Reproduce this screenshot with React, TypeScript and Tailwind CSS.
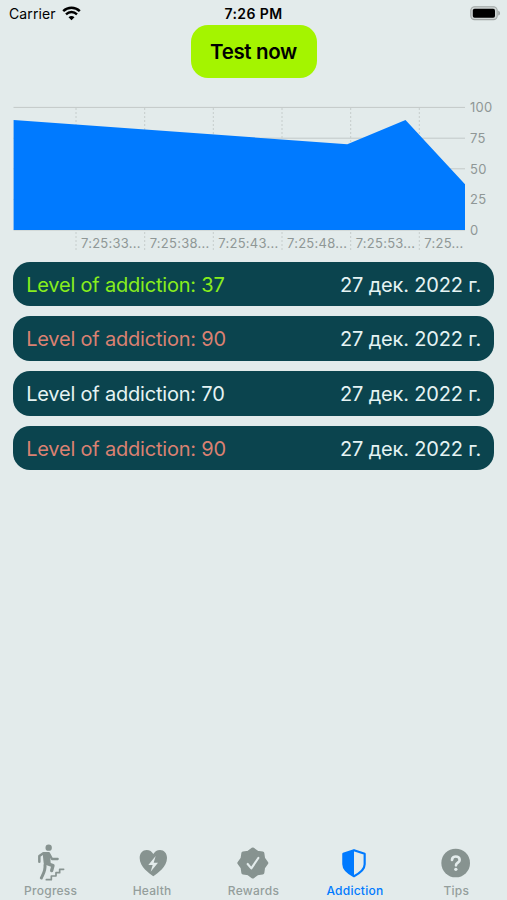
import React from "react";

const ticks = [
  { x: 76, label: "7:25:33..." },
  { x: 144.7, label: "7:25:38..." },
  { x: 213.3, label: "7:25:43..." },
  { x: 282, label: "7:25:48..." },
  { x: 350.7, label: "7:25:53..." },
  { x: 419.3, label: "7:25..." },
];

const levels = [
  { v: 100, y: 107.4 },
  { v: 75, y: 138.2 },
  { v: 50, y: 168.8 },
  { v: 25, y: 199.4 },
  { v: 0, y: 230 },
];

function StatusBar() {
  return (
    <header className="grid h-[25px] grid-cols-3 items-center pt-[2px] text-[14px]">
      <div className="flex items-center gap-[6px] pl-[9px]">
        <span className="tracking-[0.1px]">Carrier</span>
        <svg width="19" height="15" viewBox="0 0 19 15" className="-mt-[1px]" fill="none" stroke="#000">
          <path d="M1.2 5.2C6 .7 13 .7 17.8 5.2" strokeWidth="2.5" />
          <path d="M4 8.3c3.2-3 7.8-3 11 0" strokeWidth="2.4" />
          <path d="M9.5 14.2 6.5 11.2c1.7-1.6 4.3-1.6 6 0z" fill="#000" stroke="none" />
        </svg>
      </div>
      <div className="text-center font-semibold tracking-[0.4px]">7:26 PM</div>
      <div className="flex justify-end pr-[6px]">
        <svg width="31" height="15" viewBox="0 0 31 15">
          <rect x=".8" y=".8" width="26.4" height="12.8" rx="3.8" fill="#cfd5d4" stroke="#a0a6a5" strokeWidth="1.1" />
          <rect x="2.8" y="2.7" width="22.2" height="9" rx="1.8" />
          <path d="M28.2 4.8c2.5.6 2.5 4.2 0 4.8z" fill="#a0a6a5" />
        </svg>
      </div>
    </header>
  );
}

function Chart() {
  return (
    <svg className="mt-[12px] block h-[172px] w-full" viewBox="0 90 507 172">
      {levels.map((l) => (
        <line key={l.v} x1="13.5" x2="465" y1={l.y} y2={l.y} stroke="#c3c9c8" />
      ))}
      {ticks.map((t) => (
        <line key={t.x} x1={t.x} x2={t.x} y1="108" y2="252" stroke="#c6cdcc" strokeDasharray="2 2" />
      ))}
      <path d="M13.6 120 347.3 144.2 405.5 120 465 184.3V230H13.6z" fill="#007aff" />
      <g fill="#8f9796" className="text-[13px]">
        {levels.map((l) => (
          <text key={l.v} x="470" y={l.y + 4.7} className="tracking-[0.3px]">{l.v}</text>
        ))}
        {ticks.map((t) => (
          <text key={t.x} x={t.x + 5} y="247.5" className="tracking-[0.25px]">{t.label}</text>
        ))}
      </g>
    </svg>
  );
}

function Row({ level, color }: { level: number; color: string }) {
  return (
    <div className="flex h-[44.6px] items-center justify-between rounded-[17px] bg-[#0b444e] px-[13px] pt-[1.6px] text-[20px]">
      <span className={"tracking-[-0.2px] " + color}>Level of addiction: {level}</span>
      <span className="tracking-[-0.17px] text-[#e5f3f3]">27 дек. 2022 г.</span>
    </div>
  );
}

function StairsIcon() {
  return (
    <g fill="none" stroke="#879390" strokeLinecap="round" strokeLinejoin="round">
      <circle cx="44" cy="14" r="9.500" fill="#879390" stroke="none" />
      <path d="M30 31h14l2 29H33z" fill="#879390" strokeWidth="8" />
      <path d="M28 31 16 39v17" strokeWidth="7.5" />
      <path d="m46 33 8 15h17" strokeWidth="7" />
      <path d="m38 61 19 7-4 15" strokeWidth="10" />
      <path d="M33 66c2 16-4 24-11 39" strokeWidth="9" />
      <path d="M37 110h15V99h14V89h11V79h12" strokeWidth="5" />
    </g>
  );
}

function HeartIcon() {
  return (
    <>
      <path d="M55 100C43 91 14 72 14 45c0-15 9-24 21-24 9 0 16 5 20 12 4-7 11-12 20-12 12 0 21 9 21 24 0 27-29 46-41 55z" fill="#879390" />
      <path d="M62 39 40 66h13l-6 20 22-27H56z" fill="#e3ebeb" />
    </>
  );
}

function BadgeIcon() {
  return (
    <>
      <path
        d="M50.500 19 63.500 28.600 79.500 31 81.900 47 91.500 60 81.900 73 79.500 89 63.500 91.400 50.500 101 37.500 91.400 21.500 89 19.100 73 9.500 60 19.100 47 21.500 31 37.500 28.600z"
        fill="#879390" stroke="#879390" strokeWidth="11" strokeLinejoin="round"
      />
      <path d="m35 63 11 13 21-31" fill="none" stroke="#e3ebeb" strokeWidth="6.5" strokeLinecap="round" strokeLinejoin="round" />
    </>
  );
}

function ShieldIcon() {
  return (
    <>
      <path d="M48 21.500 80 32.500V64C80 81 65 91 48 99.500 31 91 16 81 16 64V32.500z" fill="none" stroke="#007aff" strokeWidth="6.5" strokeLinejoin="round" />
      <path d="M48 21 16 32v32c0 17 15 27 32 36z" fill="#007aff" />
    </>
  );
}

function HelpIcon() {
  return (
    <>
      <circle cx="50" cy="60" r="43" fill="#879390" />
      <path d="M39 51c0-14 23-14 23 0 0 8-11 8-11 16" fill="none" stroke="#e3ebeb" strokeWidth="8" strokeLinecap="round" />
      <circle cx="50.500" cy="79" r="5" fill="#e3ebeb" />
    </>
  );
}

const tabs = [
  { label: "Progress", icon: <StairsIcon />, active: false },
  { label: "Health", icon: <HeartIcon />, active: false },
  { label: "Rewards", icon: <BadgeIcon />, active: false },
  { label: "Addiction", icon: <ShieldIcon />, active: true },
  { label: "Tips", icon: <HelpIcon />, active: false },
];

export default function App() {
  return (
    <div className="flex h-[900px] w-[507px] flex-col overflow-hidden bg-[#e3ebeb] font-['Inter','Liberation_Sans',sans-serif] text-black">
      <StatusBar />
      <button className="h-[53px] w-[126px] self-center rounded-[17px] bg-[#a4f400] pt-[2px] text-[20.5px] font-semibold tracking-[-0.35px]">
        Test now
      </button>
      <Chart />
      <main className="-mt-[0.4px] flex flex-col gap-[10.1px] pr-[12.8px] pl-[13.2px]">
        <Row level={37} color="text-[#88ee1c]" />
        <Row level={90} color="text-[#da8172]" />
        <Row level={70} color="text-[#e5f3f3]" />
        <Row level={90} color="text-[#da8172]" />
      </main>
      <nav className="mt-auto grid h-[57px] grid-cols-5">
        {tabs.map((t) => (
          <div key={t.label} className="flex flex-col items-center">
            <svg width="34" height="38" viewBox="0 0 102 114">{t.icon}</svg>
            <span className={"mt-[2px] text-[12px] leading-[15px] font-medium tracking-[0.25px] " + (t.active ? "text-[#007aff]" : "text-[#949e9c]")}>
              {t.label}
            </span>
          </div>
        ))}
      </nav>
    </div>
  );
}
